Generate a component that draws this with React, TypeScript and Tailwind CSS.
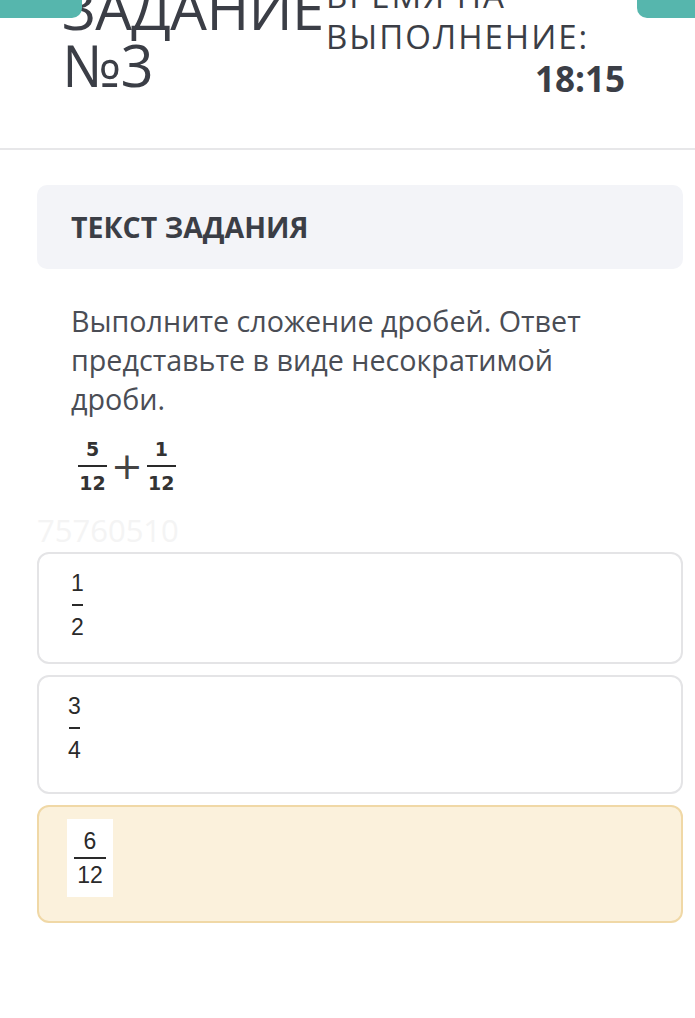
import React from 'react';

function Frac({ top, bottom, bar, gap, cls = '' }: { top: string; bottom: string; bar: string; gap: string; cls?: string }) {
  return (
    <div className={`inline-flex flex-col items-center ${gap} ${cls}`}>
      <span>{top}</span>
      <span className={`h-[2px] bg-[#2a2a2a] ${bar}`} />
      <span>{bottom}</span>
    </div>
  );
}

export default function App() {
  return (
    <div className="relative min-h-[1018px] bg-white text-[#3b3e46] font-['Open_Sans',sans-serif] overflow-hidden">
      <div className="absolute left-0 top-0 z-10 h-[18px] w-[82px] rounded-br-[10px] bg-[#56b6ad]" />
      <div className="absolute right-0 top-0 z-10 h-[18px] w-[58px] rounded-bl-[10px] bg-[#56b6ad]" />

      <header className="flex h-[150px] flex-col border-b-2 border-[#e7e7e9]">
        <div className="-mt-[25px] flex items-start pl-[62px] pr-[70px]">
          <h1 className="mt-[4px] w-[264px] text-[58px] leading-[57px] font-normal tracking-[-0.6px] text-[#3b3e46]">
            ЗАДАНИЕ
            <br />
            №3
          </h1>
          <div className="flex flex-1 flex-col">
            <div className="text-[33px] leading-[41px] tracking-[2px] text-[#3b3e46]">
              ВРЕМЯ НА
              <br />
              ВЫПОЛНЕНИЕ:
            </div>
            <div className="mt-[2px] text-right text-[35px] leading-[40px] font-bold text-[#3b3e46]">18:15</div>
          </div>
        </div>
      </header>

      <main className="pl-[37px] pr-[12px] pt-[35px]">
        <div className="flex h-[84px] items-center rounded-[10px] bg-[#f3f4f8] px-[34px]">
          <h2 className="text-[28.5px] font-bold text-[#3b3e46]">ТЕКСТ ЗАДАНИЯ</h2>
        </div>

        <p className="mt-[32px] pl-[34px] pr-[80px] text-[28.7px] leading-[39px] text-[#4a4d55]">
          Выполните сложение дробей. Ответ представьте в виде несократимой дроби.
        </p>

        <div className="mt-[20px] ml-[41px] flex items-center gap-[4px] font-['DejaVu_Sans',sans-serif] text-[19px] font-bold text-[#333]">
          <Frac top="5" bottom="12" bar="w-[29px]" gap="gap-[5px] leading-[22px]" />
          <span className="text-[38px] leading-[30px] font-normal text-[#444]">+</span>
          <Frac top="1" bottom="12" bar="w-[29px]" gap="gap-[5px] leading-[22px]" />
        </div>

        <div className="mt-[20px] font-['Open_Sans',sans-serif] text-[31px] leading-[32px] text-[#f4f4f4]">75760510</div>

        <div className="mt-[6px] flex flex-col gap-[11px]">
          <div className="h-[112px] rounded-[12px] border-2 border-[#e4e4e6] bg-white pl-[32px] pt-[17px]">
            <Frac top="1" bottom="2" bar="w-[11px]" gap="gap-[9px] leading-[24px]" cls="font-['Liberation_Sans',sans-serif] text-[23px] text-[#2a2a2a]" />
          </div>
          <div className="h-[119px] rounded-[12px] border-2 border-[#e4e4e6] bg-white pl-[29px] pt-[17px]">
            <Frac top="3" bottom="4" bar="w-[11px]" gap="gap-[9px] leading-[24px]" cls="font-['Liberation_Sans',sans-serif] text-[23px] text-[#2a2a2a]" />
          </div>
          <div className="h-[118px] rounded-[12px] border-2 border-[#f0d8a6] bg-[#fbf1dc] pl-[28px] pt-[12px]">
            <div className="inline-flex h-[78px] w-[46px] items-center justify-center bg-white">
              <Frac top="6" bottom="12" bar="w-[32px]" gap="gap-[5px] leading-[22px]" cls="font-['Liberation_Sans',sans-serif] text-[23px] text-[#2a2a2a]" />
            </div>
          </div>
        </div>
      </main>
    </div>
  );
}
